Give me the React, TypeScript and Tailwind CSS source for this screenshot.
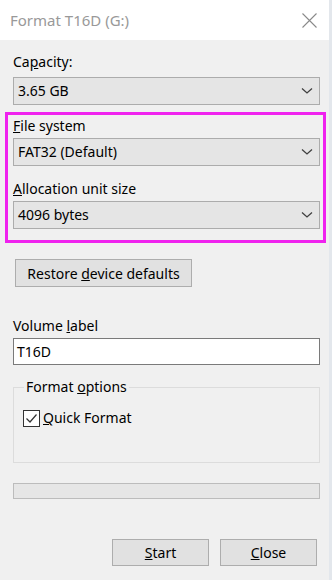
import React from "react";

const font = { fontFamily: '"Noto Sans", "Open Sans", sans-serif' };

function Chevron() {
  return (
    <svg width="12" height="8" viewBox="0 0 12 8" className="mr-[6px]">
      <path d="M1 1.5 L6 6 L11 1.5" fill="none" stroke="#404040" strokeWidth="1.3" />
    </svg>
  );
}

function Combo({ value }: { value: string }) {
  return (
    <div className="h-[28px] w-full border border-[#acacac] bg-[#e5e5e5] flex items-center justify-between pl-[4px]">
      <span className="text-[14px] text-black leading-none">{value}</span>
      <Chevron />
    </div>
  );
}

function Label({ children }: { children: React.ReactNode }) {
  return (
    <div className="h-[20px] flex items-center text-[14px] text-black leading-none">
      <span>{children}</span>
    </div>
  );
}

export default function App() {
  return (
    <div className="flex w-[332px] h-[580px] overflow-hidden" style={font}>
      <div className="w-[329px] h-full flex flex-col bg-[#f0f0f0]">
        <div className="h-[40px] bg-white flex items-center justify-between pl-[10px] pr-[12px]">
          <span className="text-[15px] text-[#999999]">Format T16D (G:)</span>
          <svg width="15" height="15" viewBox="0 0 15 15">
            <path d="M0.5 0.5 L14.5 14.5 M14.5 0.5 L0.5 14.5" stroke="#8a8a8a" strokeWidth="1.1" />
          </svg>
        </div>
        <div className="flex flex-col pr-[9px] pl-[13px]">
          <div className="mt-[12px]">
            <Label>
              Ca<u>p</u>acity:
            </Label>
          </div>
          <div className="mt-[5px]">
            <Combo value="3.65 GB" />
          </div>
          <div className="mt-[7px] -ml-[8px] -mr-[6px] border-[3px] border-[#ef22ee] pl-[5px] pr-[3px] pt-[1px] pb-[11px] flex flex-col">
            <Label>
              <u>F</u>ile system
            </Label>
            <div className="mt-[2px]">
              <Combo value="FAT32 (Default)" />
            </div>
            <div className="mt-[13px]">
              <Label>
                <u>A</u>llocation unit size
              </Label>
            </div>
            <div className="mt-[2px]">
              <Combo value="4096 bytes" />
            </div>
          </div>
          <div className="mt-[16px] ml-[2px] w-[177px] h-[28px] border border-[#adadad] bg-[#e1e1e1] flex items-center justify-center text-[14px] text-black">
            <span>
              Restore <u>d</u>evice defaults
            </span>
          </div>
          <div className="mt-[29px]">
            <Label>
              Volume <u>l</u>abel
            </Label>
          </div>
          <div className="mt-[2px] h-[27px] border border-[#7a7a7a] bg-white flex items-center pl-[3px] text-[14px] text-black">
            T16D
          </div>
          <div className="mt-[22px] h-[76px] border border-[#dcdcdc] relative">
            <span className="absolute left-[10px] -top-[11px] bg-[#f0f0f0] px-[2px] text-[14px] text-black leading-[20px]">
              Format <u>o</u>ptions
            </span>
            <div className="absolute left-[9px] top-[20px] flex items-center gap-[3px]">
              <div className="w-[17px] h-[17px] border border-[#333333] bg-white flex items-center justify-center">
                <svg width="13" height="13" viewBox="0 0 13 13">
                  <path d="M1.5 6.5 L5 10 L11.5 2.5" fill="none" stroke="#333333" strokeWidth="1.2" />
                </svg>
              </div>
              <span className="text-[14px] text-black leading-[20px]">
                <u>Q</u>uick Format
              </span>
            </div>
          </div>
          <div className="mt-[20px] h-[16px] border border-[#bcbcbc] bg-[#e6e6e6]" />
          <div className="mt-[40px] flex justify-end gap-[11px] pr-[3px]">
            <div className="w-[97px] h-[27px] border border-[#adadad] bg-[#e1e1e1] flex items-center justify-center text-[14px] text-black">
              <span>
                <u>S</u>tart
              </span>
            </div>
            <div className="w-[97px] h-[27px] border border-[#adadad] bg-[#e1e1e1] flex items-center justify-center text-[14px] text-black">
              <span>
                <u>C</u>lose
              </span>
            </div>
          </div>
        </div>
      </div>
      <div className="w-[3px] h-full bg-[#e3e7ec]" />
    </div>
  );
}
